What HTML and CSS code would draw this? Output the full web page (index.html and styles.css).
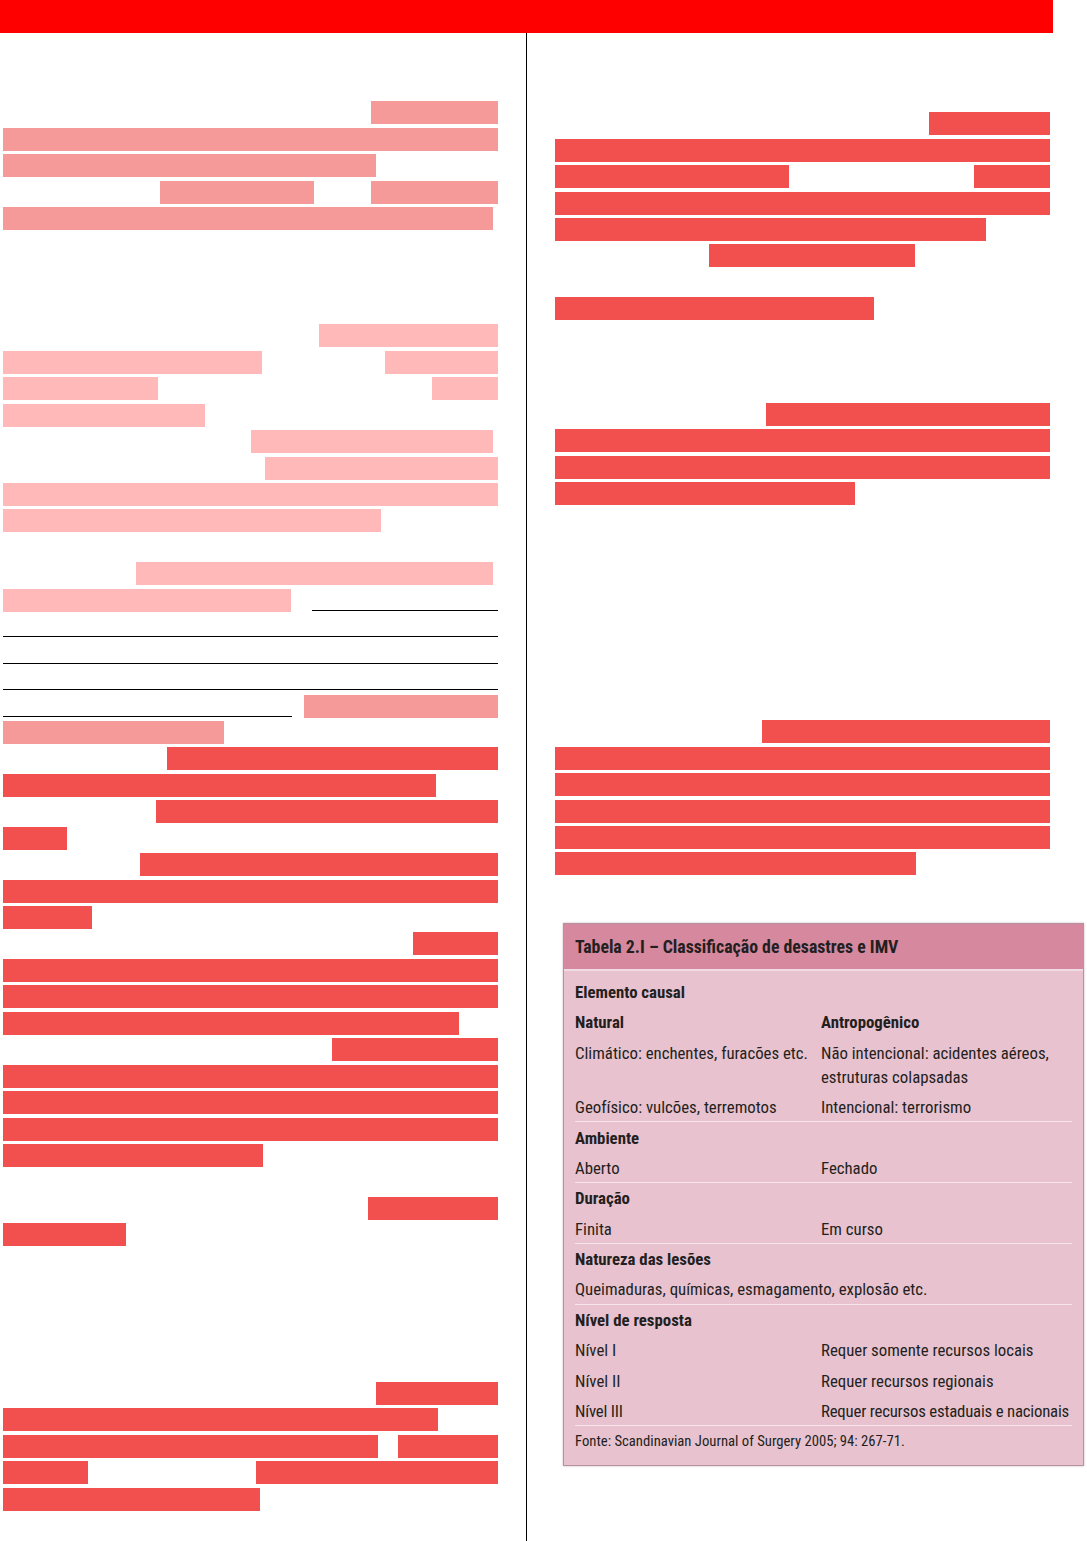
FILE: index.html
```html
<!DOCTYPE html>
<html lang="pt-BR">
<head>
<meta charset="utf-8">
<title>Classificação de desastres e IMV</title>
<link rel="stylesheet" href="styles.css">
</head>
<body>
<div class="topbar"></div>
<main class="page">
  <section class="col col-left">
    <div class="para p-intro">
      <div class="ln"><i class="hl s" style="margin-left:368px;width:127px"></i></div>
      <div class="ln"><i class="hl s" style="width:495px"></i></div>
      <div class="ln"><i class="hl s" style="width:373px"></i></div>
      <div class="ln"><i class="hl s" style="margin-left:157px;width:154px"></i><i class="hl s" style="margin-left:57px;width:127px"></i></div>
      <div class="ln"><i class="hl s" style="width:490px"></i></div>
    </div>
    <div class="para p-main">
      <div class="ln"><i class="hl p" style="margin-left:316px;width:179px"></i></div>
      <div class="ln"><i class="hl p" style="width:259px"></i><i class="hl p" style="margin-left:123px;width:113px"></i></div>
      <div class="ln"><i class="hl p" style="width:155px"></i><i class="hl p" style="margin-left:274px;width:66px"></i></div>
      <div class="ln"><i class="hl p" style="width:202px"></i></div>
      <div class="ln"><i class="hl p" style="margin-left:248px;width:242px"></i></div>
      <div class="ln"><i class="hl p" style="margin-left:262px;width:233px"></i></div>
      <div class="ln"><i class="hl p" style="width:495px"></i></div>
      <div class="ln"><i class="hl p" style="width:378px"></i></div>
      <div class="ln"></div>
      <div class="ln"><i class="hl p" style="margin-left:133px;width:357px"></i></div>
      <div class="ln"><i class="hl p" style="width:288px"></i><i class="ul" style="margin-left:21px;width:186px"></i></div>
      <div class="ln"><i class="ul" style="width:495px"></i></div>
      <div class="ln"><i class="ul" style="width:495px"></i></div>
      <div class="ln"><i class="ul" style="width:495px"></i></div>
      <div class="ln"><i class="ul" style="width:289px"></i><i class="hl s" style="margin-left:12px;width:194px"></i></div>
      <div class="ln"><i class="hl s" style="width:221px"></i></div>
      <div class="ln"><i class="hl r" style="margin-left:164px;width:331px"></i></div>
      <div class="ln"><i class="hl r" style="width:433px"></i></div>
      <div class="ln"><i class="hl r" style="margin-left:153px;width:342px"></i></div>
      <div class="ln"><i class="hl r" style="width:64px"></i></div>
      <div class="ln"><i class="hl r" style="margin-left:137px;width:358px"></i></div>
      <div class="ln"><i class="hl r" style="width:495px"></i></div>
      <div class="ln"><i class="hl r" style="width:89px"></i></div>
      <div class="ln"><i class="hl r" style="margin-left:410px;width:85px"></i></div>
      <div class="ln"><i class="hl r" style="width:495px"></i></div>
      <div class="ln"><i class="hl r" style="width:495px"></i></div>
      <div class="ln"><i class="hl r" style="width:456px"></i></div>
      <div class="ln"><i class="hl r" style="margin-left:329px;width:166px"></i></div>
      <div class="ln"><i class="hl r" style="width:495px"></i></div>
      <div class="ln"><i class="hl r" style="width:495px"></i></div>
      <div class="ln"><i class="hl r" style="width:495px"></i></div>
      <div class="ln"><i class="hl r" style="width:260px"></i></div>
      <div class="ln"></div>
      <div class="ln"><i class="hl r" style="margin-left:365px;width:130px"></i></div>
      <div class="ln"><i class="hl r" style="width:123px"></i></div>
      <div class="ln"></div>
      <div class="ln"></div>
      <div class="ln"></div>
      <div class="ln"></div>
      <div class="ln"></div>
      <div class="ln"><i class="hl r" style="margin-left:373px;width:122px"></i></div>
      <div class="ln"><i class="hl r" style="width:435px"></i></div>
      <div class="ln"><i class="hl r" style="width:375px"></i><i class="hl r" style="margin-left:20px;width:100px"></i></div>
      <div class="ln"><i class="hl r" style="width:85px"></i><i class="hl r" style="margin-left:168px;width:242px"></i></div>
      <div class="ln"><i class="hl r" style="width:257px"></i></div>
    </div>
  </section>

  <section class="col col-right">
    <div class="para p-right">
      <div class="ln"><i class="hl r" style="margin-left:374px;width:121px"></i></div>
      <div class="ln"><i class="hl r" style="width:495px"></i></div>
      <div class="ln"><i class="hl r" style="width:234px"></i><i class="hl r" style="margin-left:185px;width:76px"></i></div>
      <div class="ln"><i class="hl r" style="width:495px"></i></div>
      <div class="ln"><i class="hl r" style="width:431px"></i></div>
      <div class="ln"><i class="hl r" style="margin-left:154px;width:206px"></i></div>
      <div class="ln"></div>
      <div class="ln"><i class="hl r" style="width:319px"></i></div>
      <div class="ln"></div>
      <div class="ln"></div>
      <div class="ln"></div>
      <div class="ln"><i class="hl r" style="margin-left:211px;width:284px"></i></div>
      <div class="ln"><i class="hl r" style="width:495px"></i></div>
      <div class="ln"><i class="hl r" style="width:495px"></i></div>
      <div class="ln"><i class="hl r" style="width:300px"></i></div>
      <div class="ln"></div>
      <div class="ln"></div>
      <div class="ln"></div>
      <div class="ln"></div>
      <div class="ln"></div>
      <div class="ln"></div>
      <div class="ln"></div>
      <div class="ln"></div>
      <div class="ln"><i class="hl r" style="margin-left:207px;width:288px"></i></div>
      <div class="ln"><i class="hl r" style="width:495px"></i></div>
      <div class="ln"><i class="hl r" style="width:495px"></i></div>
      <div class="ln"><i class="hl r" style="width:495px"></i></div>
      <div class="ln"><i class="hl r" style="width:495px"></i></div>
      <div class="ln"><i class="hl r" style="width:361px"></i></div>
    </div>

    <div class="tbl">
      <div class="tbl-head">Tabela 2.I – Classificação de desastres e IMV</div>
      <div class="tbl-body">
        <div class="row hd"><span>Elemento causal</span></div>
        <div class="row hd"><span>Natural</span><span>Antropogênico</span></div>
        <div class="row"><span>Climático: enchentes, furacões etc.</span><span>Não intencional: acidentes aéreos, estruturas colapsadas</span></div>
        <div class="row sep"><span>Geofísico: vulcões, terremotos</span><span>Intencional: terrorismo</span></div>
        <div class="row hd"><span>Ambiente</span></div>
        <div class="row sep"><span>Aberto</span><span>Fechado</span></div>
        <div class="row hd"><span>Duração</span></div>
        <div class="row sep"><span>Finita</span><span>Em curso</span></div>
        <div class="row hd"><span>Natureza das lesões</span></div>
        <div class="row sep"><span class="full">Queimaduras, químicas, esmagamento, explosão etc.</span></div>
        <div class="row hd"><span>Nível de resposta</span></div>
        <div class="row"><span>Nível I</span><span>Requer somente recursos locais</span></div>
        <div class="row"><span>Nível II</span><span>Requer recursos regionais</span></div>
        <div class="row sep nw"><span>Nível III</span><span>Requer recursos estaduais e nacionais</span></div>
        <div class="row src"><span class="full">Fonte: Scandinavian Journal of Surgery 2005; 94: 267-71.</span></div>
      </div>
    </div>
  </section>
</main>
</body>
</html>
```

FILE: styles.css
```css
* {
  box-sizing: border-box;
  margin: 0;
  padding: 0;
}

html,
body {
  background: #ffffff;
}

body {
  width: 1087px;
  height: 1541px;
  overflow: hidden;
  font-family: "Roboto Condensed", Roboto, "Liberation Sans", sans-serif;
  color: #231f20;
}

.topbar {
  width: 1053px;
  height: 33px;
  background: #ff0000;
}

.page {
  display: grid;
  grid-template-columns: 527px 560px;
  height: 1508px;
}

.col-left {
  border-right: 1px solid #000000;
  padding-left: 3px;
}

.p-intro {
  margin-top: 68.3px;
}

.p-main {
  margin-top: 90.95px;
}

.col-right {
  padding-left: 28px;
  padding-top: 79.2px;
}

.ln {
  display: flex;
  height: 26.45px;
}

.hl {
  display: block;
  flex: none;
  height: 23px;
}

.s { background: #f59999; }
.p { background: #ffb9b9; }
.r { background: #f24f4f; }

.ul {
  display: block;
  flex: none;
  height: 22px;
  border-bottom: 1px solid #000000;
}

/* table */
.tbl {
  margin-top: 43.75px;
  margin-left: 8px;
  width: 521px;
  background: #e8c2cf;
  border: 1px solid #b8909f;
  box-shadow: 0 0 2px rgba(90, 40, 60, 0.35);
  padding-bottom: 8px;
}

.tbl-head {
  height: 47px;
  padding-left: 11px;
  background: #d6889f;
  border-bottom: 2px solid #f1dbe3;
  font-size: 17.8px;
  font-weight: 700;
  line-height: 45px;
  white-space: nowrap;
}

.tbl-body {
  padding: 6.3px 11px 0;
}

.row {
  display: grid;
  grid-template-columns: 246px 1fr;
  padding: 3.2px 0;
  font-size: 16.8px;
  line-height: 24px;
}

.row.hd {
  font-weight: 700;
}

.row.sep {
  padding-bottom: 2.2px;
  border-bottom: 1px solid #f5e5eb;
}

.row.nw span {
  white-space: nowrap;
  letter-spacing: -0.2px;
}

.row .full {
  grid-column: 1 / -1;
}

.row.src {
  font-size: 14.7px;
}
```
